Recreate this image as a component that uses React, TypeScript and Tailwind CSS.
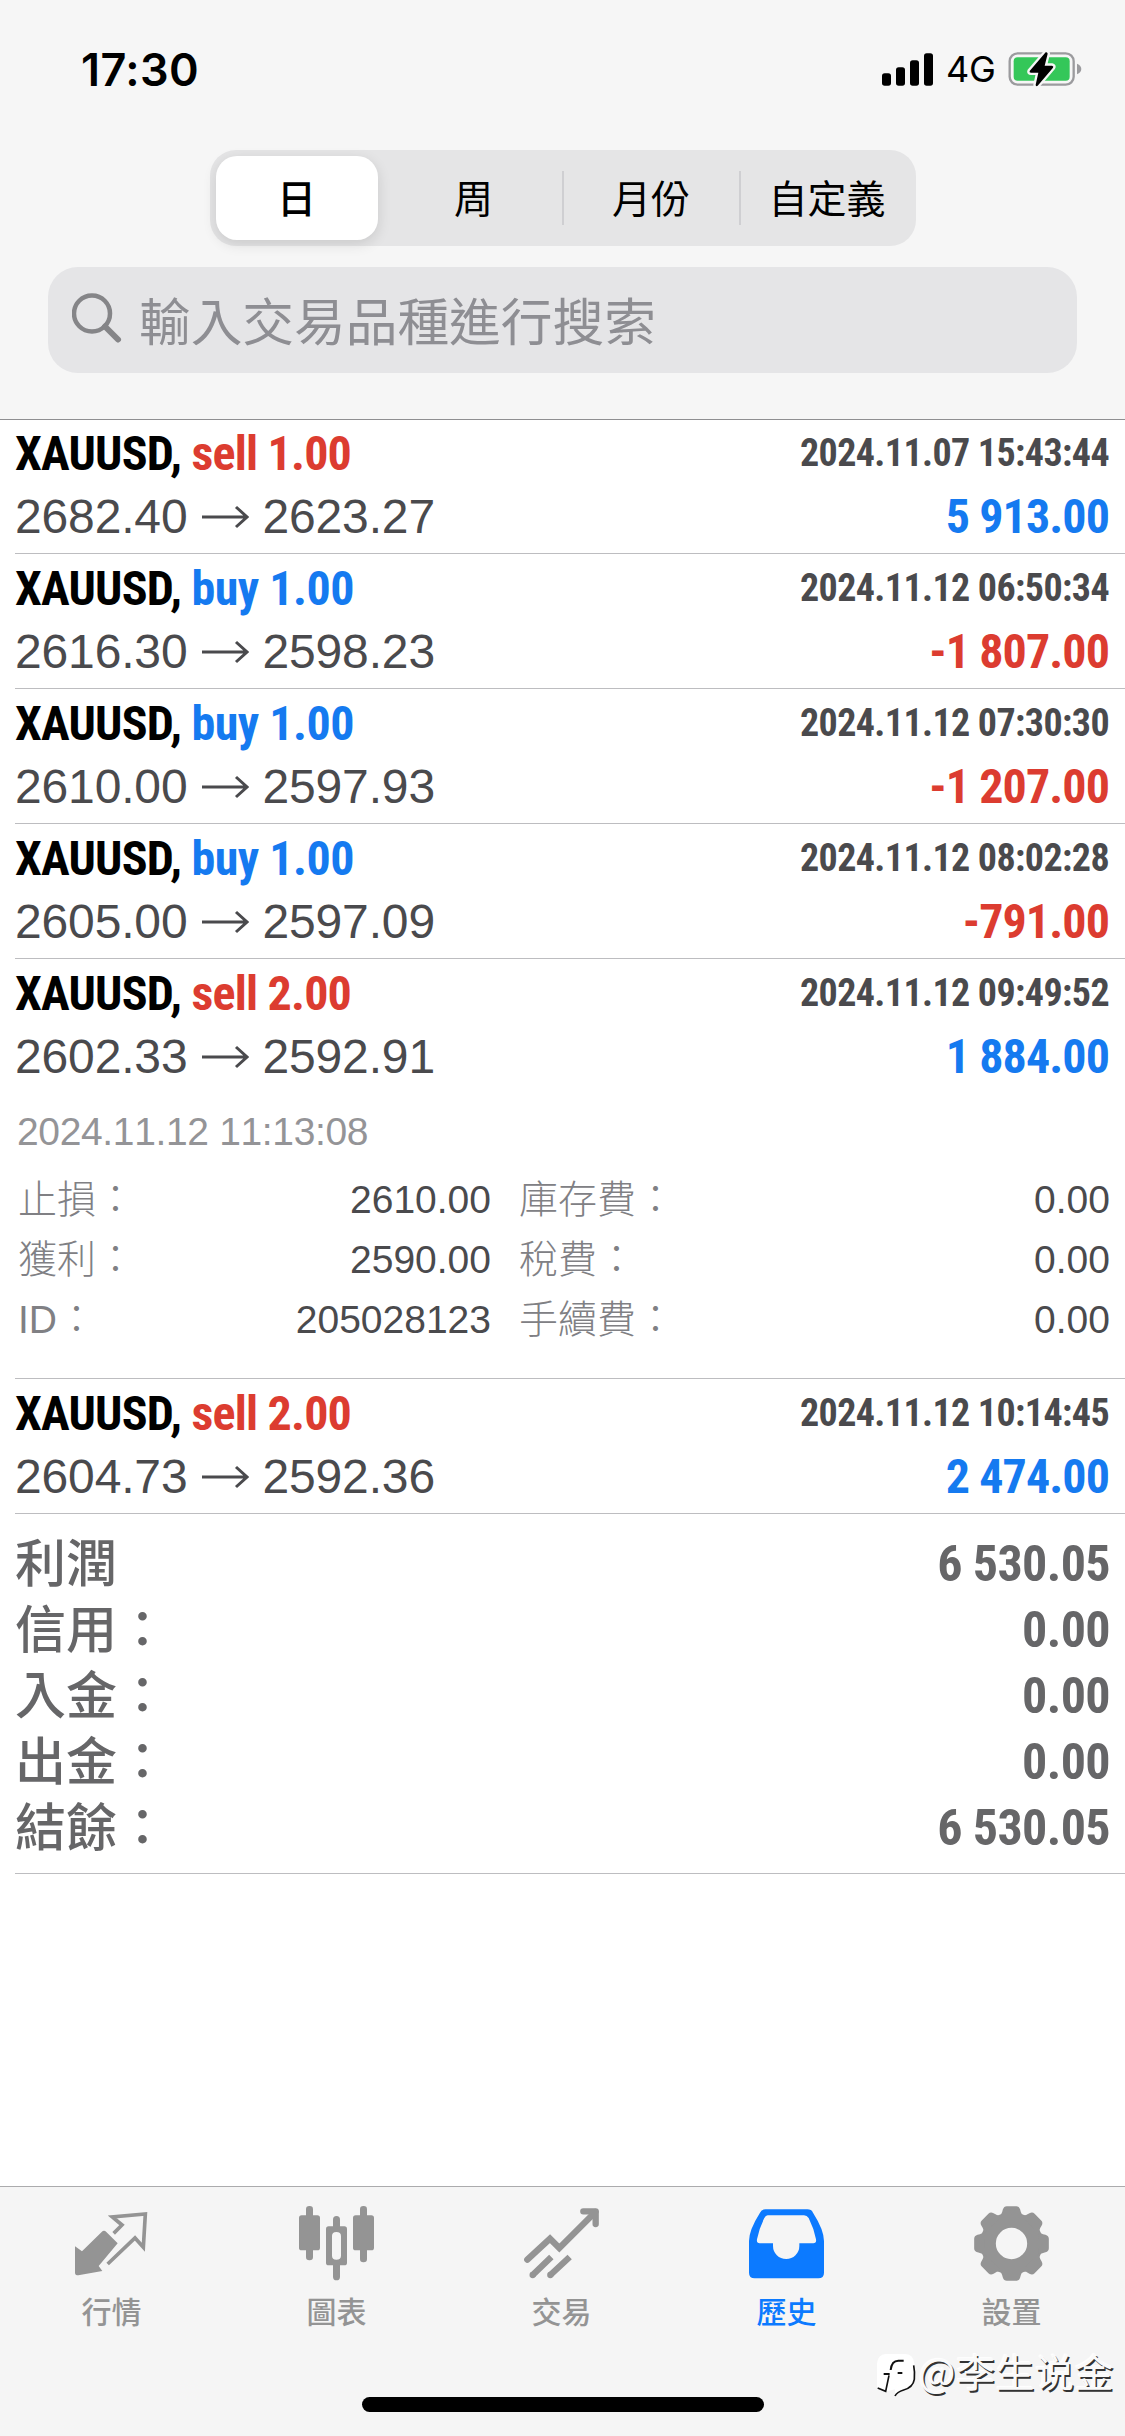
import React from 'react';

interface Deal {
    side: 'buy' | 'sell';
    volume: string;
    time: string;
    open: string;
    close: string;
    profit: string;
    expanded?: boolean;
}

const deals: Deal[] = [
    { side: 'sell', volume: '1.00', time: '2024.11.07 15:43:44', open: '2682.40', close: '2623.27', profit: '5 913.00' },
    { side: 'buy', volume: '1.00', time: '2024.11.12 06:50:34', open: '2616.30', close: '2598.23', profit: '-1 807.00' },
    { side: 'buy', volume: '1.00', time: '2024.11.12 07:30:30', open: '2610.00', close: '2597.93', profit: '-1 207.00' },
    { side: 'buy', volume: '1.00', time: '2024.11.12 08:02:28', open: '2605.00', close: '2597.09', profit: '-791.00' },
    { side: 'sell', volume: '2.00', time: '2024.11.12 09:49:52', open: '2602.33', close: '2592.91', profit: '1 884.00', expanded: true },
    { side: 'sell', volume: '2.00', time: '2024.11.12 10:14:45', open: '2604.73', close: '2592.36', profit: '2 474.00' },
];

const details = [
    ['止損：', '2610.00', '庫存費：', '0.00'],
    ['獲利：', '2590.00', '稅費：', '0.00'],
    ['ID：', '205028123', '手續費：', '0.00'],
];

const totals = [
    ['利潤', '6 530.05'],
    ['信用：', '0.00'],
    ['入金：', '0.00'],
    ['出金：', '0.00'],
    ['結餘：', '6 530.05'],
];

const condensed = "font-['Roboto_Condensed','Noto_Sans_CJK_TC',sans-serif] font-bold";

const StatusBar: React.FC = () => (
    <div className="flex h-[138px] items-center justify-between pl-[81px] pr-[43px]">
        <span className="font-['Inter',sans-serif] text-[45px] font-semibold leading-none tracking-[0.4px]">17:30</span>
        <div className="flex items-center">
            <svg className="h-[33px] w-[51px]" viewBox="0 0 153 99">
                <rect x="0" y="61" width="27" height="37" rx="8" />
                <rect x="42" y="43" width="27" height="55" rx="8" />
                <rect x="84" y="22" width="27" height="76" rx="8" />
                <rect x="126" y="1" width="27" height="97" rx="8" />
            </svg>
            <span className="ml-[13px] w-[51px] font-['Inter',sans-serif] text-[36px] leading-none tracking-[-0.3px]">4G</span>
            <svg className="ml-[11px] h-[36px] w-[74px]" viewBox="0 0 222 108">
                <rect x="5" y="7" width="192" height="94" rx="24" fill="none" stroke="#9b9b9e" strokeWidth="7" />
                <rect x="17" y="19" width="168" height="70" rx="12" fill="#34c759" />
                <path d="M207 38 Q220 44 220 54 Q220 64 207 70Z" fill="#9b9b9e" />
                <path
                    d="M113 4 L65 60 Q63 65 69 65 L91 65 L83 101 Q83 108 89 104 L135 50 Q138 45 132 44 L110 44 L119 8 Q118 2 113 4Z"
                    stroke="#f6f6f6"
                    strokeWidth="14"
                    paintOrder="stroke"
                />
            </svg>
        </div>
    </div>
);

const PeriodTabs: React.FC = () => (
    <div className="mx-auto mt-3 flex h-[96px] w-[706px] items-center rounded-[26px] bg-[#e5e5e6] font-['Noto_Sans_CJK_TC',sans-serif] text-[39px]">
        <div className="ml-[6px] flex h-[84px] w-[162px] items-center justify-center rounded-[21px] bg-white pb-[4px] font-medium shadow-[0_4px_14px_rgba(0,0,0,0.12)]">日</div>
        <div className="w-[184px] pb-[4px] pl-2 text-center">周</div>
        <div className="h-[54px] w-[2px] bg-[#cfcfd2]" />
        <div className="w-[175px] pb-[4px] text-center">月份</div>
        <div className="h-[54px] w-[2px] bg-[#cfcfd2]" />
        <div className="w-[173px] pb-[4px] text-center">自定義</div>
    </div>
);

const SearchField: React.FC = () => (
    <div className="ml-12 mt-[21px] flex h-[106px] w-[1029px] items-center rounded-[30px] bg-[#e5e5e7] pl-6 text-[#8e8e93]">
        <svg className="-mt-1 h-[51px] w-[51px]" viewBox="0 0 51 51" fill="none" stroke="#858588">
            <circle cx="20" cy="20.5" r="18" strokeWidth="4.5" />
            <path d="M33 33.5 L46 46.5" strokeWidth="6" strokeLinecap="round" />
        </svg>
        <span className="ml-[16px] pb-[2px] font-['Noto_Sans_CJK_TC',sans-serif] text-[51.700px] leading-none">輸入交易品種進行搜索</span>
    </div>
);

const DealDetails: React.FC = () => (
    <div className="font-['Liberation_Sans','Noto_Sans_CJK_TC',sans-serif] text-[39px] text-[#4a4a4d] [font-kerning:none]">
        <div className="mt-[13px] pl-[2px] leading-[62px] tracking-[-0.35px] text-[#949497]">2024.11.12 11:13:08</div>
        <div className="mt-[7px]">
            {details.map(([leftLabel, leftValue, rightLabel, rightValue]) => (
                <div key={leftLabel} className="flex h-[60px] items-center pl-[3px] pr-[15px] leading-[60px]">
                    <span className="font-light text-[#808084]">{leftLabel}</span>
                    <span className="ml-auto w-[200px] text-right">{leftValue}</span>
                    <span className="ml-[28px] w-[240px] font-light text-[#808084]">{rightLabel}</span>
                    <span className="w-[351px] text-right">{rightValue}</span>
                </div>
            ))}
        </div>
    </div>
);

const DealRow: React.FC<{ deal: Deal }> = ({ deal }) => (
    <div className={`border-b border-[#bdbdc0] pt-[3px] ${deal.expanded ? 'h-[420px]' : 'h-[135px]'}`}>
        <div className={`flex h-[63px] items-center justify-between pr-[16px] ${condensed}`}>
            <span className="text-[48px] leading-[63px] tracking-[-0.8px] text-black">
                XAUUSD, <span className={deal.side === 'sell' ? 'text-[#dc3c30]' : 'tracking-[-0.5px] text-[#157af0]'}>{deal.side} {deal.volume}</span>
            </span>
            <span className="text-[38px] leading-[63px] tracking-[-0.6px] text-[#4a4a4d]">{deal.time}</span>
        </div>
        <div className="flex h-[63px] items-center justify-between pr-[16px]">
            <div className="flex items-center font-['Liberation_Sans',sans-serif] text-[48px] leading-[63px] tracking-[-0.15px] text-[#4a4a4d]">
                <span>{deal.open}</span>
                <svg className="ml-[15px] mr-[13px] h-[24px] w-[47px]" viewBox="0 0 47 24" fill="none" stroke="currentColor" strokeWidth="3">
                    <path d="M0 12 H45 M34 2 L45 12 L34 22" />
                </svg>
                <span>{deal.close}</span>
            </div>
            <span className={`text-[48px] leading-[63px] tracking-[-0.9px] ${condensed} ${deal.profit.startsWith('-') ? 'text-[#dc3c30]' : 'text-[#157af0]'}`}>{deal.profit}</span>
        </div>
        {deal.expanded && <DealDetails />}
    </div>
);

const Totals: React.FC = () => (
    <div className="h-[360px] border-b border-[#bdbdc0] pt-[16px] text-[#666668]">
        {totals.map(([label, value]) => (
            <div key={label} className="flex h-[66px] items-center justify-between pr-[15px]">
                <span className="pb-[5px] font-['Noto_Sans_CJK_TC',sans-serif] text-[51px] font-medium leading-[61px]">{label}</span>
                <span className={`pt-[2px] text-[50px] leading-[64px] tracking-[-0.6px] ${condensed}`}>{value}</span>
            </div>
        ))}
    </div>
);

const QuotesIcon: React.FC = () => (
    <svg className="h-[75px] w-[75px]" viewBox="0 0 225 225" fill="currentColor">
        <path d="M3 121 L24 136 L83 78 Q90 71 97 78 L131 112 L74 180 L85 195 L13 208 Q3 208 3 200Z" />
        <path d="M119 82 L144 57 L115 33 L214 24 L208 124 L183 96 L101 174" fill="none" stroke="currentColor" strokeWidth="11" />
    </svg>
);

const ChartIcon: React.FC = () => (
    <svg className="h-[75px] w-[75px]" viewBox="0 0 225 225" fill="currentColor">
        <rect x="0" y="28" width="63" height="105" rx="8" />
        <rect x="21" y="0" width="21" height="163" rx="10" />
        <path fillRule="evenodd" d="M89 61 H136 Q144 61 144 69 V170 Q144 178 136 178 H89 Q81 178 81 170 V69 Q81 61 89 61Z M112 78 Q99 78 99 90 V149 Q99 161 112 161 Q126 161 126 149 V90 Q126 78 112 78Z" />
        <path d="M102 64 V41 Q102 30 112.500 30 Q123 30 123 41 V64Z M102 175 V212 Q102 223 112.500 223 Q123 223 123 212 V175Z" />
        <rect x="162" y="28" width="63" height="105" rx="8" />
        <rect x="183" y="0" width="21" height="169" rx="10" />
    </svg>
);

const TradeIcon: React.FC = () => (
    <svg className="h-[75px] w-[75px]" viewBox="0 0 225 225" fill="none" stroke="currentColor" strokeWidth="19">
        <path d="M10 161 L78 98 L106 126 L214 18" strokeLinecap="round" />
        <path d="M178 16 H215 V54" strokeLinecap="round" strokeLinejoin="round" />
        <path d="M26 207 L82 153 M79 207 L137 153" />
        <path d="M26 207 h0.100 M79 207 h0.100" strokeLinecap="round" />
    </svg>
);

const HistoryIcon: React.FC = () => (
    <svg className="h-[75px] w-[75px]" viewBox="0 0 225 225" fill="currentColor">
        <path
            fillRule="evenodd"
            d="M50 10 H175 Q187 10 192 20 Q225 72 225 105 V200 Q225 217 208 217 H17 Q0 217 0 200 V105 Q0 72 33 20 Q38 10 50 10Z M56 28 Q50 28 46 36 Q30 68 24 100 Q22 112 32 112 H72 V120 A39.500 39 0 0 0 151 120 V112 H193 Q203 112 201 100 Q195 68 179 36 Q174 28 165 28Z"
        />
    </svg>
);

const SettingsIcon: React.FC = () => (
    <svg className="h-[75px] w-[75px]" viewBox="-112.500 -112.500 225 225" fill="currentColor">
        <circle r="70" fill="none" stroke="currentColor" strokeWidth="46" />
        {[0, 45, 90, 135, 180, 225, 270, 315].map((angle) => (
            <path key={angle} transform={`rotate(${angle})`} d="M-39 -80 Q-29 -86 -26 -102 Q-23 -112 -14 -112 H14 Q23 -112 26 -102 Q29 -86 39 -80Z" />
        ))}
    </svg>
);

const tabs = [
    { label: '行情', Icon: QuotesIcon },
    { label: '圖表', Icon: ChartIcon },
    { label: '交易', Icon: TradeIcon },
    { label: '歷史', Icon: HistoryIcon, active: true },
    { label: '設置', Icon: SettingsIcon },
];

const Watermark: React.FC = () => (
    <div className="absolute right-[11px] top-[165px] flex h-[46px] items-center">
        <svg className="mr-[3px] h-[46px] w-[41px]" viewBox="0 0 123 138">
            <path d="M32 6 H92 Q116 8 118 34 V80 Q116 106 90 116 Q68 120 60 132 L60 112 L36 118 L6 112 V34 Q8 8 32 6Z" fill="#fff" />
            <g fill="none" stroke="#111">
                <path d="M116 40 Q120 60 118 82 Q114 106 86 114 Q66 120 60 132" strokeWidth="5" />
                <path d="M47 54 Q50 26 70 26 H86" strokeWidth="6" />
                <path d="M26 66 H44 M68 63 H82" strokeWidth="6" />
                <path d="M8 108 L32 118 L42 70" strokeWidth="5" />
            </g>
        </svg>
        <span className="pb-[11px] font-['Noto_Sans_CJK_SC',sans-serif] text-[39px] leading-[46px] tracking-[0.5px] text-[#fafafa] [text-shadow:1.5px_1.5px_0_#333,-1px_-1px_1px_#fff]">@李生说金</span>
    </div>
);

const TabBar: React.FC = () => (
    <nav className="relative mt-auto h-[250px] border-t border-[#ababad] bg-[#f5f5f5]">
        <div className="-ml-px mr-px grid grid-cols-5 pt-[19px]">
            {tabs.map(({ label, Icon, active }) => (
                <div key={label} className={`flex flex-col items-center ${active ? 'text-[#0c7aff]' : 'text-[#949494]'}`}>
                    <Icon />
                    <span className="mt-[8px] font-['Noto_Sans_CJK_TC',sans-serif] text-[30px] font-medium leading-[42px]">{label}</span>
                </div>
            ))}
        </div>
        <Watermark />
        <div className="mx-auto mt-[66px] h-[15px] w-[402px] rounded-full bg-black" />
    </nav>
);

export default function App() {
    return (
        <div className="flex h-[2436px] w-[1125px] flex-col overflow-hidden bg-white text-black">
            <header className="h-[420px] border-b border-[#8f8f91] bg-[#f6f6f6]">
                <StatusBar />
                <PeriodTabs />
                <SearchField />
            </header>
            <main className="-mt-px pl-[15px]">
                {deals.map((deal) => (
                    <DealRow key={deal.time} deal={deal} />
                ))}
                <Totals />
            </main>
            <TabBar />
        </div>
    );
}
